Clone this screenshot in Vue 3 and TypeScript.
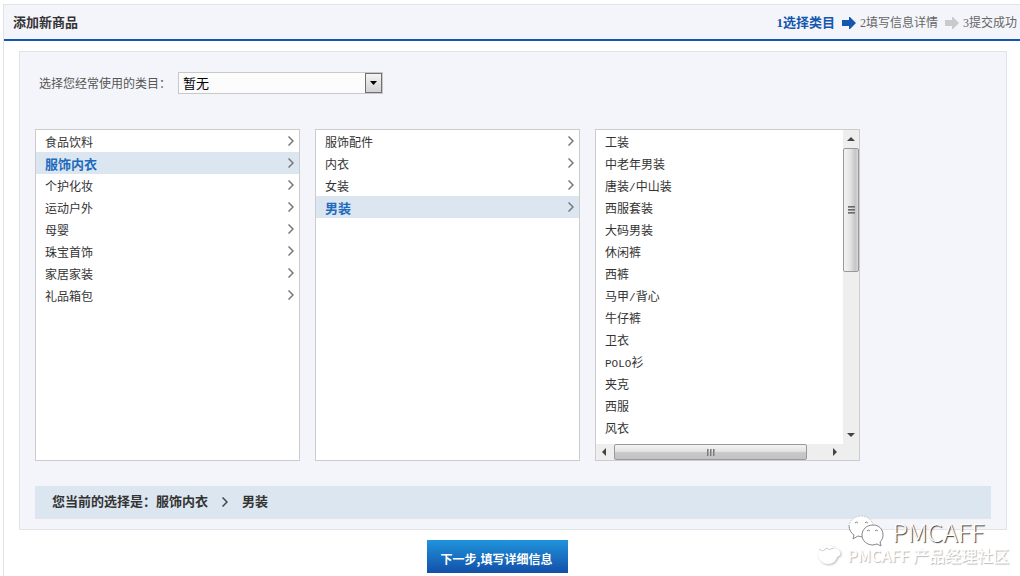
<script setup lang="ts">
import { ref } from 'vue'

interface Column {
  name: string
  items: string[]
  selected: string
}

const columns = ref<Column[]>([
  {
    name: '一级类目',
    items: ['食品饮料', '服饰内衣', '个护化妆', '运动户外', '母婴', '珠宝首饰', '家居家装', '礼品箱包'],
    selected: '服饰内衣',
  },
  { name: '二级类目', items: ['服饰配件', '内衣', '女装', '男装'], selected: '男装' },
])

const leaves = [
  '工装', '中老年男装', '唐装/中山装', '西服套装', '大码男装', '休闲裤', '西裤',
  '马甲/背心', '牛仔裤', '卫衣', 'POLO衫', '夹克', '西服', '风衣',
]
const leaf = ref('')

// Half-width runs are set in a narrow monospaced face.
const runs = (text: string): string[] => text.match(/[\x20-\x7e]+|[^\x20-\x7e]+/g) ?? []
const isLatin = (text: string): boolean => /^[\x20-\x7e]/.test(text)
</script>

<template>
  <main class="page">
    <header class="top">
      <h1>添加新商品</h1>
      <ol class="steps">
        <li class="current"><span class="num">1</span>选择类目</li>
        <li>
          <svg class="arrow" viewBox="0 0 14 12" aria-hidden="true"><path d="M0 3h7V0h1l6 6-6 6H7V9H0z" fill="#1457ae" /></svg>
          <span class="num">2</span>填写信息详情
        </li>
        <li>
          <svg class="arrow" viewBox="0 0 14 12" aria-hidden="true"><path d="M0 3h7V0h1l6 6-6 6H7V9H0z" fill="#cacaca" /></svg>
          <span class="num">3</span>提交成功
        </li>
      </ol>
    </header>

    <section class="panel">
      <div class="frequent">
        <label for="frequent">选择您经常使用的类目：</label>
        <div class="select">
          <select id="frequent"><option>暂无</option></select>
          <span class="drop"><svg viewBox="0 0 7 4" aria-hidden="true"><path d="M0 0h7L3.500 4z" /></svg></span>
        </div>
      </div>

      <div class="columns">
        <ul v-for="col in columns" :key="col.name" class="column" :aria-label="col.name">
          <li v-for="item in col.items" :key="item">
            <button type="button" class="item" :class="{ on: item === col.selected }" @click="col.selected = item">
              <span>{{ item }}</span>
              <svg class="chev" viewBox="0 0 6 10" aria-hidden="true"><path d="M.5.5 5 5 .5 9.500" /></svg>
            </button>
          </li>
        </ul>

        <div class="column scroller">
          <ul aria-label="三级类目">
            <li v-for="item in leaves" :key="item">
              <button type="button" class="item" :class="{ on: item === leaf }" @click="leaf = item">
                <span><span v-for="(run, i) in runs(item)" :key="i" :class="{ latin: isLatin(run) }">{{ run }}</span></span>
              </button>
            </li>
          </ul>
          <div class="bar vertical">
            <svg class="tip" viewBox="0 0 16 18" aria-hidden="true"><path d="M4 11 8 7l4 4z" /></svg>
            <span class="thumb"><i></i><i></i><i></i></span>
            <svg class="tip end" viewBox="0 0 16 18" aria-hidden="true"><path d="M4 7h8l-4 4z" /></svg>
          </div>
          <div class="bar horizontal">
            <svg class="tip" viewBox="0 0 18 16" aria-hidden="true"><path d="M10 4v8L6 8z" /></svg>
            <span class="thumb"><i></i><i></i><i></i></span>
            <svg class="tip end" viewBox="0 0 18 16" aria-hidden="true"><path d="M8 4l4 4-4 4z" /></svg>
          </div>
          <div class="corner"></div>
        </div>
      </div>

      <p class="choice">
        <span>您当前的选择是：{{ columns[0].selected }}</span>
        <svg class="chev dark" viewBox="0 0 6 10" aria-hidden="true"><path d="M.5.5 5 5 .5 9.500" /></svg>
        <span>{{ columns[1].selected }}</span>
      </p>
    </section>

    <div class="actions">
      <button type="button" class="next">下一步,填写详细信息</button>
    </div>

    <div class="mark">
      <div class="mark-main">
        <svg class="wechat" viewBox="0 0 36 32" aria-hidden="true">
          <path d="M13 1C6 1 1 6 1 12c0 4 3 7 5 8l-1 4 5-3 4 1C14 15 19 10 25 10 24 5 19 1 13 1z" fill="#fff" />
          <path d="M1 10c0 5 2 8 5 10l-1 4 5-3 4 1" fill="none" stroke="#888" />
          <path d="M1 12C1 6 6 1 13 1s11 4 12 9" fill="none" stroke="#ccc" stroke-dasharray="2 1" />
          <path d="M25 10c-6 0-11 4-11 10s5 10 11 10l4-1 4 2-1-4c2-2 3-4 3-7 0-6-4-10-10-10z" fill="#fff" stroke="#888" />
          <path d="M7 8q1-2 3 0M17 8q1-2 3 0M19 16q1-2 3 0M27 16q1-2 3 0" fill="none" stroke="#888" />
        </svg>
        <span>PMCAFF</span>
      </div>
      <div class="mark-sub">
        <svg class="cup" viewBox="0 0 26 22" aria-hidden="true">
          <path d="M2 5c-3 8 2 15 9 15 5 0 8-3 9-7 3-1 4-3 3-5s-2-3-4-3C16 1 8 0 2 5z" fill="#fff" />
          <path d="M2 5q5 4 7-1 3 3 8 0" fill="none" stroke="#ccc" />
        </svg>
        <span>PMCAFF 产品经理社区</span>
      </div>
    </div>
  </main>
</template>

<style>
body {
  margin: 0;
  background: #fff;
}
</style>

<style scoped>
.page {
  position: relative;
  box-sizing: border-box;
  min-height: calc(100vh - 4px);
  margin: 4px 0 0 3px;
  border-top: 1px solid #e2e3e6;
  border-left: 1px solid #e2e3e6;
  font: 12px/22px "Liberation Serif", "Noto Sans CJK SC", sans-serif;
  color: #333;
}
ul, ol, h1, p {
  margin: 0;
  padding: 0;
  list-style: none;
}
button {
  font: inherit;
  color: inherit;
  border: 0;
  cursor: pointer;
}
.top {
  display: flex;
  justify-content: space-between;
  align-items: center;
  box-sizing: border-box;
  height: 36px;
  padding: 1px 3px 0 9px;
  background: #f4f5fa;
  border-bottom: 2px solid #1457ae;
}
h1 {
  font-size: 13px;
  font-weight: 700;
}
.steps {
  display: flex;
  gap: 7px;
  color: #666;
}
.steps li {
  display: flex;
  align-items: center;
}
.steps .current {
  color: #1457ae;
  font-size: 13px;
  font-weight: 700;
}
.arrow {
  width: 14px;
  height: 12px;
  margin-right: 4px;
}
.panel {
  margin: 10px 13px 0 15px;
  padding: 20px 15px 10px;
  background: #f4f5fa;
  border: 1px solid #e2e3e6;
}
.frequent {
  display: flex;
  align-items: center;
  height: 22px;
  padding-left: 4px;
  color: #555;
}
.frequent label {
  width: 139px;
  padding-top: 2px;
}
.select {
  display: grid;
  grid-template-columns: 1fr 17px;
  box-sizing: border-box;
  width: 205px;
  height: 22px;
  border: 1px solid #c8c8c8;
  background: #fcfcfc;
}
.select select {
  grid-area: 1 / 1 / 2 / 3;
  appearance: none;
  width: 100%;
  padding: 0 4px;
  border: 0;
  background: transparent;
  font: 13px/20px "Noto Sans CJK SC", sans-serif;
  color: #000;
}
.drop {
  grid-area: 1 / 2;
  display: grid;
  place-items: center;
  border: 1px solid #707070;
  background: linear-gradient(#f4f4f4, #d2d2d2);
  pointer-events: none;
}
.drop svg {
  width: 7px;
  height: 4px;
}
.columns {
  display: flex;
  gap: 15px;
  margin-top: 35px;
}
.column {
  box-sizing: border-box;
  width: 265px;
  min-height: 332px;
  border: 1px solid #ccc;
  background: #fff;
}
.item {
  display: flex;
  justify-content: space-between;
  align-items: center;
  width: 100%;
  height: 22px;
  padding: 4px 5px 0 9px;
  background: none;
  text-align: left;
}
.item.on {
  background: #dce6f0;
  color: #1e6bbd;
  font-size: 13px;
  font-weight: 700;
}
.latin {
  font-family: "Liberation Mono", monospace;
  font-size: 11px;
  line-height: 1;
}
.chev {
  width: 6px;
  height: 10px;
  margin-bottom: 4px;
  fill: none;
  stroke: #777;
  stroke-width: 1.5;
}
.scroller {
  display: grid;
  grid-template: 1fr 16px / 1fr 16px;
}
.bar {
  display: flex;
  background: #eee;
}
.vertical {
  flex-direction: column;
}
.tip {
  flex: none;
  fill: #444;
}
.vertical .tip {
  width: 16px;
  height: 18px;
}
.horizontal .tip {
  width: 18px;
  height: 16px;
}
.vertical .end {
  margin-top: auto;
}
.horizontal .end {
  margin-left: auto;
}
.thumb {
  display: flex;
  justify-content: center;
  align-items: center;
  gap: 1px;
  box-sizing: border-box;
  border: 1px solid #999;
  border-radius: 2px;
}
.vertical .thumb {
  flex-direction: column;
  height: 124px;
  background: linear-gradient(90deg, #f3f3f3, #e4e4e4 45%, #c5c5c8 80%, #d8d8d8);
}
.horizontal .thumb {
  width: 193px;
  background: linear-gradient(#f3f3f3, #e4e4e4 45%, #c8c8cb 55%, #c2c2c4);
}
.vertical i {
  width: 7px;
  height: 2px;
  background: linear-gradient(#555, #aaa);
}
.horizontal i {
  width: 2px;
  height: 7px;
  background: linear-gradient(90deg, #666, #bbb);
}
.corner {
  background: #eee;
}
.choice {
  display: flex;
  align-items: center;
  gap: 14px;
  height: 32px;
  margin-top: 25px;
  padding-left: 17px;
  background: #dce6f0;
  border-bottom: 1px solid #e3e4e8;
  font-size: 13px;
  font-weight: 700;
}
.dark {
  stroke: #444;
  margin-bottom: 0;
}
.actions {
  display: flex;
  justify-content: center;
  padding: 10px 29px 0 0;
}
.next {
  width: 141px;
  height: 33px;
  padding: 4px 2px 0 0;
  background: linear-gradient(#2094dc, #134fa8);
  color: #fff;
  font: 700 12px/18px "Noto Sans CJK SC", sans-serif;
}
.mark {
  position: absolute;
  right: 11px;
  bottom: 10px;
  pointer-events: none;
  font-family: "Noto Sans CJK SC", sans-serif;
  color: #fff;
}
.mark-main {
  display: flex;
  align-items: center;
  gap: 8px;
  padding-left: 31px;
  height: 26px;
  font-size: 25px;
  font-weight: 300;
  text-shadow: 1px 1px 1px #333;
}
.wechat {
  width: 36px;
  height: 32px;
}
.mark-sub {
  display: flex;
  align-items: center;
  gap: 4px;
  height: 22px;
  font-size: 16px;
  font-weight: 500;
  text-shadow: 1px 1px 1px #bbb;
}
.cup {
  width: 26px;
  height: 22px;
  filter: drop-shadow(1px 1px 1px #bbb);
}
</style>
